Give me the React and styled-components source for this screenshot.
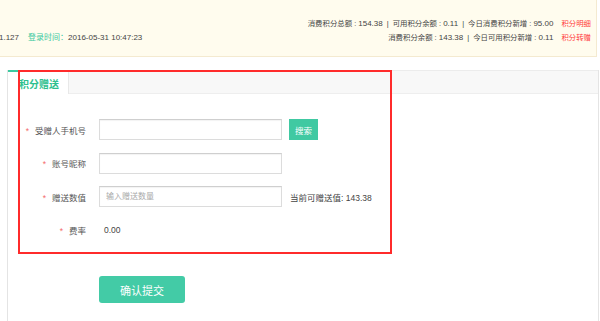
import styled, { createGlobalStyle } from "styled-components";

const GlobalStyle = createGlobalStyle`
  html, body {
    margin: 0;
    padding: 0;
    background: #fff;
  }
  body {
    font-family: "Liberation Sans", "Noto Sans CJK SC", sans-serif;
    color: #444;
  }
`;

const stats = [
  [
    { label: "消费积分总额", value: "154.38" },
    { label: "可用积分余额", value: "0.11" },
    { label: "今日消费积分新增", value: "95.00" },
  ],
  [
    { label: "消费积分余额", value: "143.38" },
    { label: "今日可用积分新增", value: "0.11" },
  ],
];

const links = ["积分明细", "积分转赠"];

function App() {
  return (
    <Page>
      <GlobalStyle />
      <InfoBar>
        <LoginInfo>
          1.127<Green>登录时间：</Green>2016-05-31 10:47:23
        </LoginInfo>
        <StatList>
          {stats.map((line, i) => (
            <StatLine key={i}>
              {line.map((s, j) => (
                <span key={s.label}>
                  {j > 0 && <Sep>|</Sep>}
                  {s.label} : <Num>{s.value}</Num>
                </span>
              ))}
              <RedLink>{links[i]}</RedLink>
            </StatLine>
          ))}
        </StatList>
      </InfoBar>

      <Panel>
        <Highlight />
        <TabBar>
          <Tab>积分赠送</Tab>
        </TabBar>
        <Form>
          <Row>
            <Label>
              <Star>*</Star>受赠人手机号
            </Label>
            <Input />
            <SearchButton>搜索</SearchButton>
          </Row>
          <Row>
            <Label>
              <Star>*</Star>账号昵称
            </Label>
            <Input />
          </Row>
          <Row>
            <Label>
              <Star>*</Star>赠送数值
            </Label>
            <Input placeholder="输入赠送数量" />
            <Hint>当前可赠送值: 143.38</Hint>
          </Row>
          <Row>
            <Label>
              <Star>*</Star>费率
            </Label>
            <Value>0.00</Value>
          </Row>
          <SubmitRow>
            <Submit>确认提交</Submit>
          </SubmitRow>
        </Form>
      </Panel>
    </Page>
  );
}

const Page = styled.div`
  width: 600px;
  height: 321px;
  overflow: hidden;
`;

const InfoBar = styled.div`
  box-sizing: border-box;
  width: 597px;
  height: 57px;
  background: #fffcee;
  border-right: 1.5px solid #f4ead0;
  border-bottom: 1.5px solid #f4ead0;
  display: flex;
  justify-content: space-between;
  align-items: flex-start;
  padding: 17px 5px 0 0;
  font-size: 8px;
  line-height: 14px;
  color: #444;
`;

const LoginInfo = styled.div`
  margin-top: 14px;
  white-space: nowrap;
  margin-left: -1px;
`;

const Green = styled.span`
  color: #3cc9a0;
  margin-left: 9px;
`;

const StatList = styled.div`
  display: flex;
  flex-direction: column;
  align-items: flex-end;
`;

const StatLine = styled.div`
  white-space: nowrap;
  font-size: 7.4px;
`;

const Num = styled.span`
  font-size: 8px;
`;

const Sep = styled.span`
  margin: 0 4px;
`;

const RedLink = styled.span`
  color: #ff3b3b;
  margin-left: 8px;
`;

const Panel = styled.div`
  position: relative;
  box-sizing: border-box;
  margin: 13px 0 0 7px;
  width: 592px;
  height: 260px;
  border-left: 1px solid #e4e4e4;
  border-right: 1px solid #e4e4e4;
`;

const Highlight = styled.div`
  position: absolute;
  left: 10px;
  top: 0;
  width: 374px;
  height: 184px;
  box-sizing: border-box;
  border: 2px solid #ff2b2b;
  pointer-events: none;
  z-index: 2;
`;

const TabBar = styled.div`
  height: 24px;
  background: #f8f8f8;
  border-top: 1px solid #ececec;
  border-bottom: 1px solid #eeeeee;
  display: flex;
  box-sizing: border-box;
`;

const Tab = styled.div`
  box-sizing: border-box;
  width: 61px;
  height: 24px;
  margin-top: -1px;
  background: #fff;
  border-top: 2px solid #3cc9a0;
  border-right: 1px solid #e8e8e8;
  color: #2ebf8e;
  font-size: 10px;
  font-weight: bold;
  display: flex;
  align-items: center;
  padding-left: 11px;
`;

const Form = styled.div`
  padding-top: 25px;
  display: flex;
  flex-direction: column;
  gap: 12.5px;
`;

const Row = styled.div`
  display: flex;
  align-items: center;
  height: 21px;
  font-size: 8.5px;
`;

const Label = styled.div`
  width: 78px;
  text-align: right;
  color: #555;
  margin-right: 13px;
  white-space: nowrap;
`;

const Star = styled.span`
  color: #f46b6b;
  margin-right: 6px;
`;

const Input = styled.input`
  box-sizing: border-box;
  width: 183px;
  height: 21px;
  border: 1px solid #dcdcdc;
  border-top-color: #cfcfcf;
  box-shadow: inset 0 1px 1px rgba(0, 0, 0, 0.05);
  padding: 0 6px;
  font-family: "Liberation Sans", "Noto Sans CJK SC", sans-serif;
  font-size: 8px;
  outline: none;

  &::placeholder {
    color: #aaa;
  }
`;

const SearchButton = styled.button`
  box-sizing: border-box;
  margin-left: 7px;
  width: 29px;
  height: 21px;
  border: none;
  background: #40c9a2;
  color: #fff;
  font-family: "Liberation Sans", "Noto Sans CJK SC", sans-serif;
  font-size: 8.5px;
  padding: 0;
`;

const Hint = styled.span`
  margin-left: 8px;
  color: #444;
`;

const Value = styled.span`
  margin-left: 5px;
  color: #444;
`;

const SubmitRow = styled.div`
  padding: 23px 0 0 91px;
`;

const Submit = styled.button`
  width: 86px;
  height: 27px;
  border: none;
  border-radius: 3px;
  background: #43cba6;
  color: #fff;
  font-family: "Liberation Sans", "Noto Sans CJK SC", sans-serif;
  font-size: 11px;
  padding: 0;
`;

export default App;
